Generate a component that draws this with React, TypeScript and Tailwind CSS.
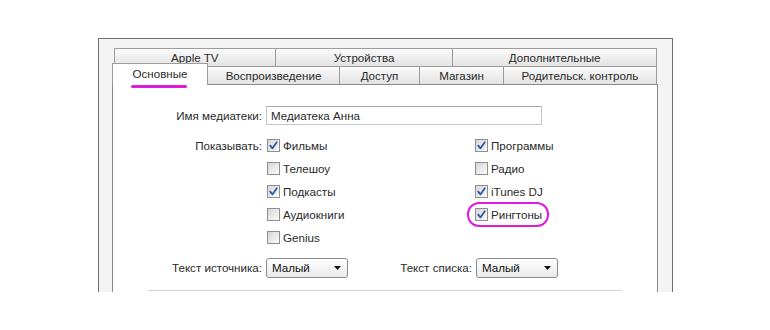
import React from "react";

const leftItems = [
  { label: "Фильмы", checked: true },
  { label: "Телешоу", checked: false },
  { label: "Подкасты", checked: true },
  { label: "Аудиокниги", checked: false },
  { label: "Genius", checked: false },
];

const rightItems = [
  { label: "Программы", checked: true },
  { label: "Радио", checked: false },
  { label: "iTunes DJ", checked: true },
  { label: "Рингтоны", checked: true, marked: true },
];

const Checkbox: React.FC<{ checked: boolean }> = ({ checked }) => (
  <span className="w-[13px] h-[13px] shrink-0 border border-[#8e8f8f] bg-linear-to-br from-[#d6d6d6] to-[#fbfbfb] flex items-center justify-center">
    {checked && (
      <svg width="11" height="11" viewBox="0 0 11 11">
        <path
          d="M2.2 5.6 L4.4 8.4 L8.8 2.2"
          fill="none"
          stroke="#2b53a6"
          strokeWidth="1.7"
          strokeLinecap="round"
          strokeLinejoin="round"
        />
      </svg>
    )}
  </span>
);

const CheckRow: React.FC<{ label: string; checked: boolean; marked?: boolean }> = ({
  label,
  checked,
  marked,
}) => (
  <div className="relative h-[23px] flex items-center gap-[3px]">
    <Checkbox checked={checked} />
    <span>{label}</span>
    {marked && (
      <span className="absolute left-[-8px] top-[-1px] w-[82px] h-[25px] border-2 border-[#e01be0] rounded-[12px]" />
    )}
  </div>
);

const Select: React.FC<{ value: string }> = ({ value }) => (
  <div className="w-[82px] h-[20px] border border-[#8a8a8a] rounded-[3px] bg-linear-to-b from-white to-[#e9e9e9] flex items-center justify-between pl-[5px] pr-[6px]">
    <span className="text-[#111]">{value}</span>
    <svg width="7" height="4" viewBox="0 0 7 4">
      <path d="M0 0 H7 L3.5 4 Z" fill="#111" />
    </svg>
  </div>
);

const Tab: React.FC<{ label: string; w: string }> = ({ label, w }) => (
  <div
    className={`${w} h-[18px] border-l border-t border-r border-[#9c9c9c] -ml-px first:ml-0 bg-linear-to-b from-[#fbfbfb] to-[#e2e2e2] flex items-center justify-center`}
  >
    {label}
  </div>
);

export default function App() {
  return (
    <div
      className="w-[770px] h-[330px] bg-white pl-[98px] pt-[38px] text-[11.6px] text-[#2a2a2a] leading-none"
      style={{ fontFamily: '"Liberation Sans", Arial, sans-serif' }}
    >
      <div className="w-[575px] h-[254px] border-l border-t border-r border-[#6e6e6e] bg-[#f4f4f4] pt-[9px] pl-[13px] flex flex-col">
        {/* tab rows */}
        <div className="flex ml-[2px] w-[543px]">
          <Tab label="Apple TV" w="w-[162px]" />
          <Tab label="Устройства" w="w-[179px]" />
          <Tab label="Дополнительные" w="w-[205px]" />
        </div>
        <div className="flex h-[18px] relative z-10">
          <div className="relative w-[96px] h-[22px] -mt-[3px] border-l border-t border-r border-[#9c9c9c] bg-white flex items-center justify-center pb-[1px]">
            Основные
            <span className="absolute left-[18px] top-[21px] w-[56px] h-[3px] rounded-full bg-[#e01be0]" />
          </div>
          <Tab label="Воспроизведение" w="w-[133px]" />
          <Tab label="Доступ" w="w-[81px]" />
          <Tab label="Магазин" w="w-[85px]" />
          <Tab label="Родительск. контроль" w="w-[154px]" />
        </div>

        {/* panel */}
        <div className="w-[546px] flex-1 border-l border-t border-r border-[#8a8a8a] bg-white pt-[21px]">
          <div className="flex items-center gap-[4px]">
            <span className="w-[149px] text-right">Имя медиатеки:</span>
            <div className="w-[276px] h-[19px] border border-[#c6c6c6] border-t-[#a8a8a8] flex items-center pl-[4px]">
              Медиатека Анна
            </div>
          </div>

          <div className="flex mt-[9px]">
            <div className="w-[149px] mr-[4px] text-right h-[23px] flex items-center justify-end">
              Показывать:
            </div>
            <div className="w-[209px] pl-[1px]">
              {leftItems.map((it) => (
                <CheckRow key={it.label} label={it.label} checked={it.checked} />
              ))}
            </div>
            <div>
              {rightItems.map((it) => (
                <CheckRow
                  key={it.label}
                  label={it.label}
                  checked={it.checked}
                  marked={it.marked}
                />
              ))}
            </div>
          </div>

          <div className="flex items-center gap-[4px] mt-[9px]">
            <span className="w-[149px] text-right">Текст источника:</span>
            <Select value="Малый" />
            <span className="w-[120px] text-right">Текст списка:</span>
            <Select value="Малый" />
          </div>

          <div className="ml-[35px] w-[474px] h-px bg-[#d4d4d4] mt-[12px]" />
        </div>
      </div>
    </div>
  );
}
